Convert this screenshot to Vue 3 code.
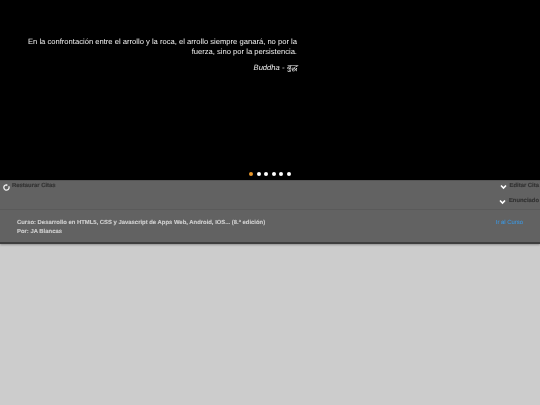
<script setup>
const dots = [0, 1, 2, 3, 4, 5]
</script>

<template>
  <div class="page">
    <div class="slider">
      <div class="quote">
        <p class="quote-text">En la confrontación entre el arrollo y la roca, el arrollo siempre ganará, no por la fuerza, sino por la persistencia.</p>
        <p class="quote-author">Buddha - बुद्ध</p>
      </div>
      <div class="dots">
        <span v-for="d in dots" :key="d" class="dot" :class="{ active: d === 0 }"></span>
      </div>
    </div>
    <div class="panel">
      <div class="tools">
        <div class="tool-left">
          <svg class="icon" width="7" height="7" viewBox="0 0 8 8">
            <path d="M6.6 2.6A3 3 0 1 1 4 1" fill="none" stroke="#eee" stroke-width="1.5" />
            <path d="M3.6 0 L5.8 1.2 L3.6 2.6Z" fill="#eee" />
          </svg>
          <span class="tool-label">Restaurar Citas</span>
        </div>
        <div class="tool-right">
          <div class="tool-item">
            <svg class="chev" width="7" height="6" viewBox="0 0 7 6">
              <path d="M1 1.5 L3.5 4 L6 1.5" fill="none" stroke="#fff" stroke-width="1.6" />
            </svg>
            <span class="tool-label">Editar Cita</span>
          </div>
          <div class="tool-item">
            <svg class="chev" width="7" height="6" viewBox="0 0 7 6">
              <path d="M1 1.5 L3.5 4 L6 1.5" fill="none" stroke="#fff" stroke-width="1.6" />
            </svg>
            <span class="tool-label">Enunciado</span>
          </div>
        </div>
      </div>
      <div class="course">
        <div class="course-info">
          <div>Curso: Desarrollo en HTML5, CSS y Javascript de Apps Web, Android, IOS... (8.ª edición)</div>
          <div>Por: JA Blancas</div>
        </div>
        <a class="course-link">Ir al Curso</a>
      </div>
    </div>
  </div>
</template>

<style scoped>
.page {
  height: 405px;
  background: #cccccc;
  font-family: "Liberation Sans", Arial, sans-serif;
  text-rendering: geometricPrecision;
  overflow: hidden;
  filter: blur(0.3px);
}
.slider {
  height: 180px;
  background: #000;
  display: flex;
  flex-direction: column;
  box-sizing: border-box;
  padding-top: 36.5px;
}
.quote {
  width: 272px;
  margin-left: 25px;
  text-align: right;
  color: #eee;
  font-size: 7.62px;
}
.quote-text {
  margin: 0;
  line-height: 10.6px;
}
.quote-author {
  margin: 5.5px 0 0;
  font-style: italic;
  line-height: 10px;
}
.dots {
  margin-top: auto;
  margin-bottom: 4px;
  display: flex;
  justify-content: center;
  gap: 3.6px;
}
.dot {
  width: 4px;
  height: 4px;
  border-radius: 50%;
  background: #fff;
}
.dot.active {
  background: #e8962a;
}
.panel {
  height: 64px;
  background: #626262;
  border-top: 1px solid #555;
  border-bottom: 2px solid #3e3e3e;
  box-sizing: border-box;
  box-shadow: 0 1px 2px rgba(0, 0, 0, 0.3);
}
.tools {
  height: 29px;
  display: flex;
  justify-content: space-between;
  border-bottom: 1px solid #5a5a5a;
  box-sizing: border-box;
}
.tool-left {
  display: flex;
  align-items: center;
  align-self: flex-start;
  gap: 2px;
  padding-left: 3px;
  height: 9px;
}
.icon {
  margin-top: 3px;
}
.tool-right {
  display: flex;
  flex-direction: column;
  align-items: flex-end;
  gap: 5px;
  padding-right: 1px;
}
.tool-item {
  display: flex;
  align-items: center;
  gap: 3px;
  height: 10px;
}
.chev {
  margin-top: 2px;
}
.tool-label {
  font-size: 5.9px;
  font-weight: bold;
  color: #333;
  white-space: nowrap;
  -webkit-text-stroke: 0.15px #333;
}
.course {
  display: flex;
  justify-content: space-between;
  padding: 9px 14px 0 17px;
}
.course-info {
  color: #d0d0d0;
  font-size: 5.9px;
  font-weight: bold;
  line-height: 8.5px;
  -webkit-text-stroke: 0.1px #d0d0d0;
}
.course-link {
  color: #3f95da;
  font-size: 5.9px;
  line-height: 8.5px;
  margin-right: 3px;
  -webkit-text-stroke: 0.1px #3f95da;
}
</style>
